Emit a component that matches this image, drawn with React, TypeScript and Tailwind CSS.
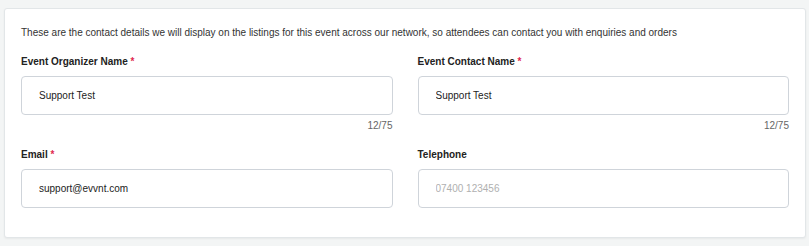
import React from 'react';

const font = { fontFamily: '"Liberation Sans", Arial, sans-serif' };

function Field({
  label,
  required,
  value,
  placeholder,
  counter,
}: {
  label: string;
  required?: boolean;
  value?: string;
  placeholder?: string;
  counter?: string;
}) {
  return (
    <div className="flex flex-col">
      <label className="text-[10px] leading-4 font-bold text-[#222]">
        {label}
        {required && <span className="text-[#e0284f]"> *</span>}
      </label>
      <input
        type="text"
        defaultValue={value}
        placeholder={placeholder}
        className="mt-[6px] h-[39px] w-full rounded-[4px] border border-[#cfd4da] bg-white px-[17px] text-[10px] text-[#222] placeholder-[#b0b0b0] outline-none"
      />
      {counter && <div className="mt-[3px] text-right text-[10px] leading-4 text-[#666]">{counter}</div>}
    </div>
  );
}

export default function App() {
  return (
    <div className="min-h-[246px] bg-[#f3f5f5] pt-2 pl-1 pr-[3px]" style={font}>
      <div className="rounded-[3px] border border-[#e2e6e8] bg-white px-4 pt-4 pb-[29px] shadow-[0_1px_2px_rgba(0,0,0,0.05)]">
        <p className="text-[10px] leading-4 text-[#333]">
          These are the contact details we will display on the listings for this event across our network, so attendees can contact you with enquiries and orders
        </p>
        <div className="mt-[13px] grid grid-cols-2 gap-x-[25px] gap-y-[13px]">
          <Field label="Event Organizer Name" required value="Support Test" counter="12/75" />
          <Field label="Event Contact Name" required value="Support Test" counter="12/75" />
          <Field label="Email" required value="support@evvnt.com" />
          <Field label="Telephone" placeholder="07400 123456" />
        </div>
      </div>
    </div>
  );
}
